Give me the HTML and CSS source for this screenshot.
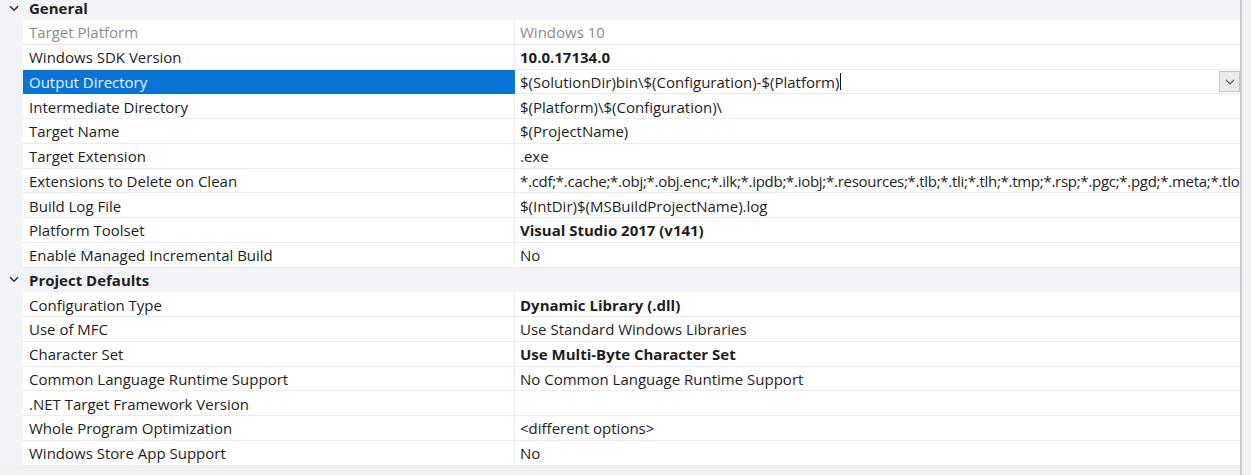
FILE: index.html
```html
<!DOCTYPE html>
<html>
<head>
<meta charset="utf-8">
<link rel="stylesheet" href="styles.css">
</head>
<body>
<div class="frame">
  <div class="grid">
    <div class="row cat first"><span class="chev"><svg width="10" height="7" viewBox="0 0 10 7"><path d="M1 1.2 L5 5.2 L9 1.2" fill="none" stroke="#333" stroke-width="1.6"/></svg></span><span class="catname">General</span></div>

    <div class="row"><div class="gut"></div><div class="name dim">Target Platform</div><div class="val dim">Windows 10</div></div>
    <div class="row"><div class="gut"></div><div class="name">Windows SDK Version</div><div class="val b">10.0.17134.0</div></div>
    <div class="row sel"><div class="gut"></div><div class="name">Output Directory</div><div class="val edit"><span class="txt">$(SolutionDir)bin\$(Configuration)-$(Platform)</span><span class="caret"></span><span class="drop"><svg width="10" height="6" viewBox="0 0 10 6"><path d="M1 0.8 L5 4.8 L9 0.8" fill="none" stroke="#555" stroke-width="1.2"/></svg></span></div></div>
    <div class="row"><div class="gut"></div><div class="name">Intermediate Directory</div><div class="val">$(Platform)\$(Configuration)\</div></div>
    <div class="row"><div class="gut"></div><div class="name">Target Name</div><div class="val">$(ProjectName)</div></div>
    <div class="row"><div class="gut"></div><div class="name">Target Extension</div><div class="val">.exe</div></div>
    <div class="row"><div class="gut"></div><div class="name">Extensions to Delete on Clean</div><div class="val tight">*.cdf;*.cache;*.obj;*.obj.enc;*.ilk;*.ipdb;*.iobj;*.resources;*.tlb;*.tli;*.tlh;*.tmp;*.rsp;*.pgc;*.pgd;*.meta;*.tlo</div></div>
    <div class="row"><div class="gut"></div><div class="name">Build Log File</div><div class="val">$(IntDir)$(MSBuildProjectName).log</div></div>
    <div class="row"><div class="gut"></div><div class="name">Platform Toolset</div><div class="val b">Visual Studio 2017 (v141)</div></div>
    <div class="row"><div class="gut"></div><div class="name">Enable Managed Incremental Build</div><div class="val">No</div></div>

    <div class="row cat"><span class="chev"><svg width="10" height="7" viewBox="0 0 10 7"><path d="M1 1.2 L5 5.2 L9 1.2" fill="none" stroke="#333" stroke-width="1.6"/></svg></span><span class="catname">Project Defaults</span></div>

    <div class="row"><div class="gut"></div><div class="name">Configuration Type</div><div class="val b">Dynamic Library (.dll)</div></div>
    <div class="row"><div class="gut"></div><div class="name">Use of MFC</div><div class="val">Use Standard Windows Libraries</div></div>
    <div class="row"><div class="gut"></div><div class="name">Character Set</div><div class="val b">Use Multi-Byte Character Set</div></div>
    <div class="row"><div class="gut"></div><div class="name">Common Language Runtime Support</div><div class="val">No Common Language Runtime Support</div></div>
    <div class="row"><div class="gut"></div><div class="name">.NET Target Framework Version</div><div class="val"></div></div>
    <div class="row"><div class="gut"></div><div class="name">Whole Program Optimization</div><div class="val">&lt;different options&gt;</div></div>
    <div class="row"><div class="gut"></div><div class="name">Windows Store App Support</div><div class="val">No</div></div>
  </div>
  <div class="scroll"></div>
</div>
</body>
</html>
```
FILE: styles.css
```css
html, body {
  margin: 0;
  padding: 0;
  background: #f1f1f2;
  overflow: hidden;
}
body {
  width: 1251px;
  height: 475px;
  font-family: "Open Sans", "Noto Sans", sans-serif;
  font-size: 15px;
  color: #1e1e1e;
}
.frame {
  display: flex;
  height: 475px;
}
.grid {
  width: 1240px;
  display: flex;
  flex-direction: column;
}
.row {
  display: flex;
  height: 24.75px;
  flex: 0 0 24.75px;
  align-items: stretch;
  background: #f3f4f8;
}
.row.first {
  height: 20px;
  flex: 0 0 20px;
  padding-bottom: 4px;
  box-sizing: border-box;
}
.gut {
  width: 23px;
  flex: 0 0 23px;
  background: #f3f4f8;
}
.name {
  width: 492px;
  flex: 0 0 492px;
  padding-left: 6px;
  box-sizing: border-box;
  background: #fff;
  border-bottom: 1px solid #ececef;
  border-right: 1px solid #ececef;
  display: flex;
  align-items: center;
  white-space: nowrap;
  overflow: hidden;
  padding-top: 1px;
}
.val {
  flex: 1 1 auto;
  min-width: 0;
  padding-left: 5px;
  box-sizing: border-box;
  background: #fff;
  border-bottom: 1px solid #ececef;
  display: flex;
  align-items: center;
  white-space: nowrap;
  overflow: hidden;
  padding-top: 1px;
}
.tight { letter-spacing: -0.28px; }
.dim { color: #8c8c8c; }
.b { font-weight: 700; }
.cat {
  align-items: center;
}
.chev {
  width: 28px;
  flex: 0 0 28px;
  display: flex;
  justify-content: center;
  box-sizing: border-box;
}
.catname {
  font-weight: 700;
  margin-left: 1px;
}
.sel .name {
  background: #0a74d6;
  color: #e8f3ff;
  border-right: 1px solid #0a74d6;
  border-bottom-color: #0a74d6;
}
.caret {
  display: inline-block;
  width: 1px;
  height: 17px;
  background: #111;
  margin-left: 1px;
}
.drop {
  margin-left: auto;
  width: 21px;
  height: 21px;
  box-sizing: border-box;
  border: 1px solid #c6c6c6;
  background: #ececec;
  display: flex;
  align-items: center;
  justify-content: center;
}
.scroll {
  width: 2px;
  flex: 0 0 2px;
  background: #c9c9cc;
}
```
